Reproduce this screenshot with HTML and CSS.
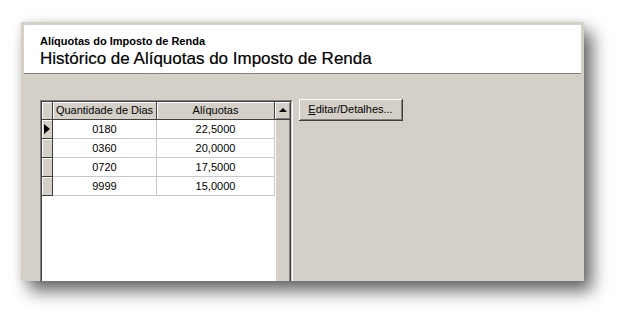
FILE: index.html
```html
<!DOCTYPE html>
<html lang="pt">
<head>
<meta charset="utf-8">
<title>Alíquotas do Imposto de Renda</title>
<link rel="stylesheet" href="styles.css">
</head>
<body>
<div class="page">
  <div class="window">
    <div class="header">
      <div class="subtitle">Alíquotas do Imposto de Renda</div>
      <div class="title">Histórico de Alíquotas do Imposto de Renda</div>
    </div>
    <div class="panel">
      <div class="grid">
        <div class="grid-inner">
          <div class="table">
            <div class="cell fixed"></div>
            <div class="cell fixed head">Quantidade de Dias</div>
            <div class="cell fixed head">Alíquotas</div>

            <div class="cell fixed ind"><span class="arrow"></span></div>
            <div class="cell data">0180</div>
            <div class="cell data">22,5000</div>

            <div class="cell fixed ind"></div>
            <div class="cell data">0360</div>
            <div class="cell data">20,0000</div>

            <div class="cell fixed ind"></div>
            <div class="cell data">0720</div>
            <div class="cell data">17,5000</div>

            <div class="cell fixed ind"></div>
            <div class="cell data">9999</div>
            <div class="cell data">15,0000</div>
          </div>
          <div class="scrollbar">
            <div class="sb-btn"><span class="up"></span></div>
            <div class="sb-thumb"></div>
          </div>
        </div>
      </div>
      <button class="btn"><u>E</u>ditar/Detalhes...</button>
    </div>
  </div>
</div>
</body>
</html>
```
FILE: styles.css
```css
html, body {
  margin: 0;
  padding: 0;
  background: #ffffff;
}
.page {
  padding: 22px 0 0 21px;
  min-height: 323px;
  box-sizing: border-box;
}
.window {
  width: 563px;
  height: 259px;
  box-sizing: border-box;
  background: #d4d0c8;
  padding: 3px 3px 0 3px;
  box-shadow: 8px 10px 16px rgba(0, 0, 0, 0.6), 0 0 6px rgba(0, 0, 0, 0.1);
  display: flex;
  flex-direction: column;
  overflow: hidden;
  font-family: "Liberation Sans", Arial, sans-serif;
  color: #000;
}
.header {
  background: #ffffff;
  height: 49px;
  box-sizing: border-box;
  padding: 10px 0 0 16px;
  border-bottom: 1px solid #808080;
  flex: none;
}
.subtitle {
  font-size: 11px;
  font-weight: bold;
  line-height: 13px;
}
.title {
  font-size: 17px;
  line-height: 20px;
  margin-top: 1px;
  -webkit-text-stroke: 0.2px #000;
}
.panel {
  flex: 1;
  display: flex;
  align-items: flex-start;
  gap: 6px;
  padding: 26px 0 0 16px;
  min-height: 0;
}
.grid {
  height: 200px;
  border-top: 1px solid #808080;
  border-left: 1px solid #808080;
  border-right: 1px solid #ffffff;
  flex: none;
}
.grid-inner {
  height: 100%;
  box-sizing: border-box;
  border-top: 1px solid #404040;
  border-left: 1px solid #404040;
  border-right: 1px solid #d4d0c8;
  background: #ffffff;
  display: flex;
  align-items: stretch;
}
.table {
  display: grid;
  grid-template-columns: 11px 104px 118px;
  grid-template-rows: 18px repeat(4, 19px);
  align-self: flex-start;
}
.cell {
  box-sizing: border-box;
  font-size: 11px;
  line-height: 18px;
  text-align: center;
  white-space: nowrap;
}
.fixed {
  background: #d4d0c8;
  border-right: 1px solid #404040;
  border-bottom: 1px solid #404040;
  box-shadow: inset 1px 1px 0 #ffffff;
}
.head {
  line-height: 16px;
}
.ind {
  position: relative;
}
.arrow {
  position: absolute;
  left: 2px;
  top: 4px;
  width: 0;
  height: 0;
  border-top: 5px solid transparent;
  border-bottom: 5px solid transparent;
  border-left: 6px solid #000;
}
.data {
  background: #ffffff;
  border-right: 1px solid #c8c8c8;
  border-bottom: 1px solid #c8c8c8;
}
.scrollbar {
  width: 16px;
  display: flex;
  flex-direction: column;
  flex: none;
}
.sb-btn {
  height: 18px;
  box-sizing: border-box;
  background: #d4d0c8;
  border-right: 1px solid #404040;
  border-bottom: 1px solid #404040;
  box-shadow: inset 1px 1px 0 #ffffff, inset -1px -1px 0 #808080;
  display: flex;
  align-items: center;
  justify-content: center;
}
.up {
  width: 0;
  height: 0;
  border-left: 4px solid transparent;
  border-right: 4px solid transparent;
  border-bottom: 4px solid #000;
  margin-top: -1px;
}
.sb-thumb {
  flex: 1;
  box-sizing: border-box;
  background: #d4d0c8;
  border-right: 1px solid #404040;
  box-shadow: inset 1px 0 0 #ffffff, inset -1px 0 0 #808080;
}
.btn {
  width: 104px;
  height: 22px;
  margin: -1px 0 0 0;
  padding: 0 0 1px 0;
  box-sizing: border-box;
  background: #d4d0c8;
  border: none;
  border-right: 1px solid #404040;
  border-bottom: 1px solid #404040;
  box-shadow: inset 1px 1px 0 #ffffff, inset -1px -1px 0 #808080;
  font-family: "Liberation Sans", Arial, sans-serif;
  font-size: 11px;
  color: #000;
  text-align: center;
}
.btn u {
  text-decoration: underline;
}
```
